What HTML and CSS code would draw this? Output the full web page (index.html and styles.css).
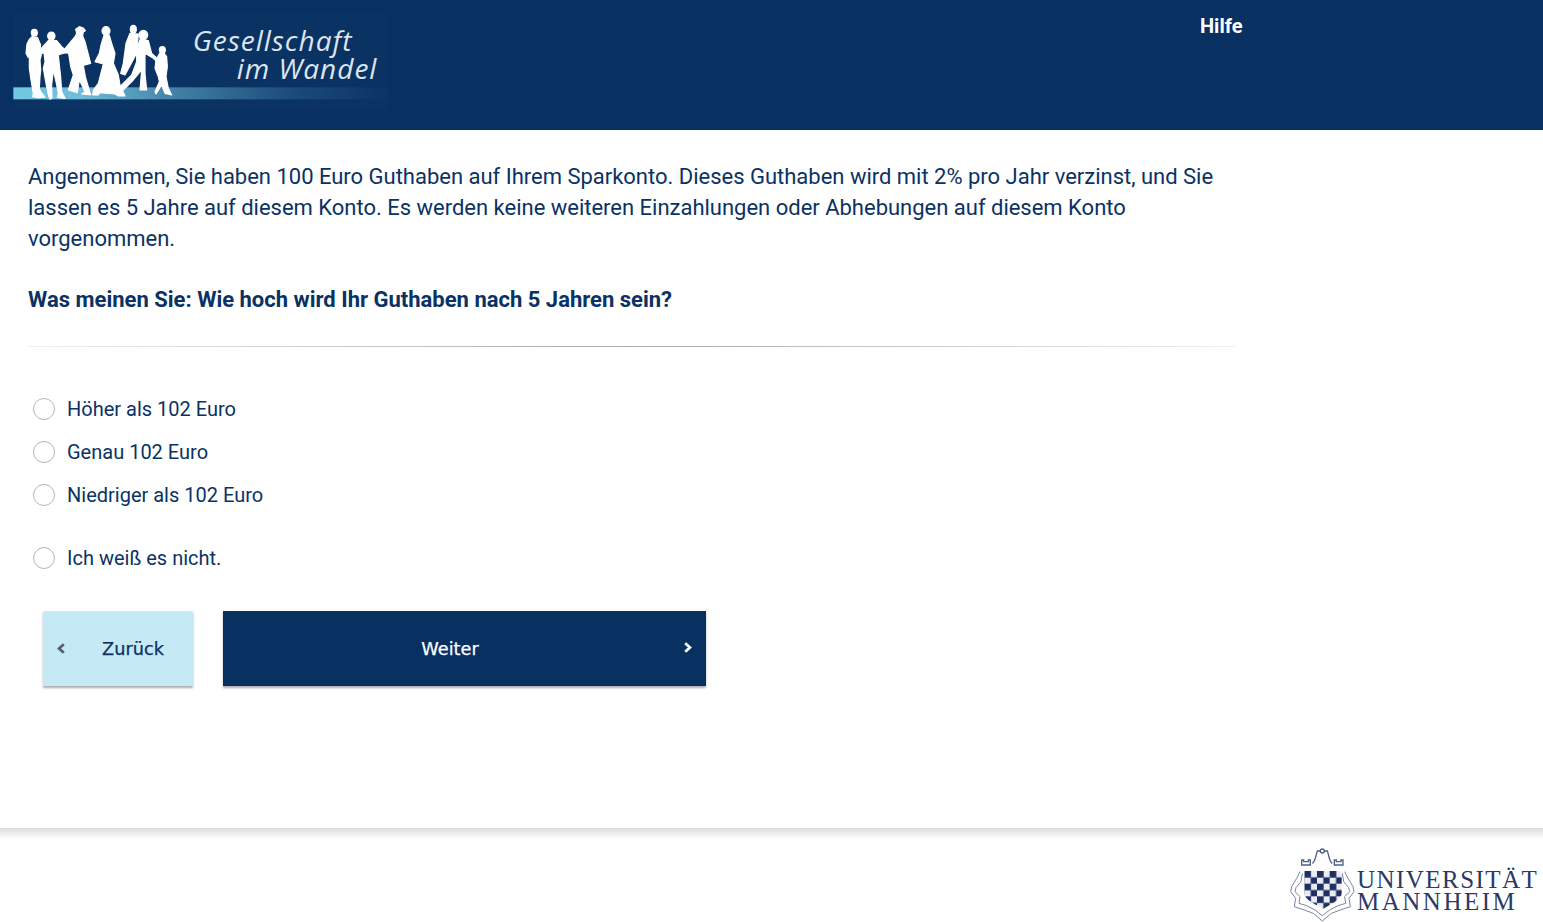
FILE: index.html
```html
<!DOCTYPE html>
<html lang="de">
<head>
<meta charset="utf-8">
<title>Gesellschaft im Wandel</title>
<link rel="stylesheet" href="styles.css">
</head>
<body>
<header class="site-header">
  <svg class="brand" viewBox="0 0 1200 390" width="400" height="130" role="img" aria-label="Gesellschaft im Wandel">
    <defs>
      <linearGradient id="bar" x1="0" x2="1" y1="0" y2="0">
        <stop offset="0" stop-color="#72c8e2"/>
        <stop offset=".18" stop-color="#6dbcd8"/>
        <stop offset=".45" stop-color="#3f7da3"/>
        <stop offset=".75" stop-color="#1b4a78"/>
        <stop offset="1" stop-color="#0b3363"/>
      </linearGradient>
    </defs>
    <rect x="40" y="40" width="1125" height="290" fill="#0a3262"/>
    <rect x="40" y="262" width="1125" height="36" fill="url(#bar)"/>
    <g class="people" fill="#fff" stroke="#fff" stroke-width="3.500" stroke-linejoin="round">
      <g transform="translate(60 60)">
        <ellipse cx="43" cy="38" rx="9" ry="10"/>
        <path d="M36 50L28 58 21 72 18 100 24 112 28 112 28 145 33 180 40 222 38 230 55 233 75 231 62 215 58 205 60 170 62 150 60 120 64 105 60 90 62 75 52 52Z"/>
        <ellipse cx="94" cy="48" rx="11" ry="12"/>
        <path d="M86 60L76 72 60 90 66 100 72 98 75 125 70 145 78 190 85 225 90 238 96 235 95 195 100 150 108 185 115 220 112 232 135 235 125 215 122 170 118 135 115 105 128 100 140 98 135 88 125 80 110 62Z"/>
        <path d="M167 28L178 20 190 24 196 32 190 36 188 48 195 65 212 130 190 136 196 170 212 225 185 222 195 215 178 180 172 218 145 210 160 165 152 140 146 100 128 95 140 80 165 50 170 40Z"/>
      </g>
      <g transform="translate(270 60)">
        <ellipse cx="48" cy="33" rx="12" ry="13"/>
        <path d="M42 46L33 75 28 100 15 125 40 132 25 190 10 210 8 225 25 225 30 218 75 222 85 228 105 228 90 195 85 165 70 130 75 100 65 70 58 46Z"/>
        <ellipse cx="130" cy="28" rx="9" ry="12"/>
        <path d="M120 40L108 70 100 130 92 160 105 165 140 100 145 42Z"/>
        <ellipse cx="160" cy="45" rx="13" ry="14"/>
        <path d="M150 58L140 90 140 125 125 165 95 195 88 210 100 210 130 180 155 150 150 210 170 210 165 160 165 100 190 115 200 125 205 118 185 100 175 62Z"/>
        <ellipse cx="217" cy="90" rx="9" ry="10"/>
        <path d="M208 101L198 120 195 145 205 170 208 185 195 215 198 222 215 195 225 220 245 225 235 205 228 170 232 140 230 110 222 99Z"/>
      </g>
    </g>
    <text class="brand-line" x="578" y="153">Gesellschaft</text>
    <text class="brand-line" x="710" y="237">im Wandel</text>
  </svg>
  <a class="help-link" href="#">Hilfe</a>
</header>

<main class="content">
  <p class="intro">Angenommen, Sie haben 100 Euro Guthaben auf Ihrem Sparkonto. Dieses Guthaben wird mit 2% pro Jahr verzinst, und Sie lassen es 5 Jahre auf diesem Konto. Es werden keine weiteren Einzahlungen oder Abhebungen auf diesem Konto vorgenommen.</p>
  <p class="question">Was meinen Sie: Wie hoch wird Ihr Guthaben nach 5 Jahren sein?</p>
  <hr class="divider">
  <ul class="options">
    <li class="option"><span class="radio"></span>Höher als 102 Euro</li>
    <li class="option"><span class="radio"></span>Genau 102 Euro</li>
    <li class="option"><span class="radio"></span>Niedriger als 102 Euro</li>
    <li class="option option-apart"><span class="radio"></span>Ich weiß es nicht.</li>
  </ul>
  <div class="actions">
    <button class="btn btn-back" type="button">
      <svg class="chevron chevron-left" viewBox="0 0 8 11" width="8" height="11"><path d="M6.800 1.200L2 5.500l4.800 4.300" fill="none" stroke="#555f6c" stroke-width="2.800"/></svg>
      Zurück
    </button>
    <button class="btn btn-next" type="button">
      Weiter
      <svg class="chevron chevron-right" viewBox="0 0 8 11" width="8" height="11"><path d="M1.200 1.200L6 5.500 1.200 9.800" fill="none" stroke="#fff" stroke-width="2.800"/></svg>
    </button>
  </div>
</main>

<footer class="site-footer">
  <div class="uni-logo">
    <svg class="crest" viewBox="0 0 216 231" width="72" height="77" aria-hidden="true">
      <defs>
        <pattern id="check" width="38" height="38" patternUnits="userSpaceOnUse" x="58" y="78">
          <rect width="38" height="38" fill="#e9ebf2"/>
          <rect width="20" height="20" fill="#1f2f62"/>
          <rect x="19" y="19" width="20" height="20" fill="#1f2f62"/>
        </pattern>
      </defs>
      <g fill="none" stroke="#4f5f88" stroke-width="4">
        <path d="M50 60V45H56V50H70V45H76V60ZM82 55C92 50 92 30 97 18H106M118 18H127C132 30 132 50 142 55M148 60V45H154V50H168V45H174V60Z"/>
        <circle cx="112" cy="18" r="6"/>
      </g>
      <g fill="none" stroke="#7684a4" stroke-width="3">
        <path d="M45 80L35 100 20 125 17 140 32 160 28 185 58 195 85 205 112 228 139 205 166 195 196 185 192 160 207 140 204 125 189 100 179 80"/>
        <path d="M52 85L48 110 33 128 30 140 45 155 42 175 65 182 90 195 112 212 134 195 159 182 182 175 179 155 194 140 191 128 176 110 172 85"/>
      </g>
      <path d="M58 78H170V145C170 165 135 178 114 192 93 178 58 165 58 145Z" fill="url(#check)"/>
    </svg>
    <div class="uni-name"><span class="uni-top">UNIVERSITÄT</span><span class="uni-bottom">MANNHEIM</span></div>
  </div>
</footer>
</body>
</html>
```
FILE: styles.css
```css
* { box-sizing: border-box; }
html, body { height: 100%; }
body {
  margin: 0;
  display: flex;
  flex-direction: column;
  overflow: hidden;
  background: #fff;
  color: #0a3264;
  font-family: Roboto, "Liberation Sans", sans-serif;
}
.site-header {
  flex: none;
  height: 130px;
  display: flex;
  align-items: flex-start;
  background: #083061;
}
.brand { display: block; flex: none; }
.people { filter: blur(.8px); }
.brand-line {
  font-family: "Open Sans", sans-serif;
  font-style: italic;
  font-size: 84px;
  letter-spacing: 3px;
  fill: #dde5ee;
}
.help-link {
  margin: 14px 0 0 800px;
  color: #fff;
  font-size: 20px;
  line-height: 24px;
  font-weight: 700;
  text-decoration: none;
}
.content {
  flex: 1;
  padding: 31px 0 0 28px;
  width: 1235px;
}
.intro, .question {
  margin: 0;
  font-size: 22px;
  line-height: 31px;
}
.intro { letter-spacing: -.01px; }
.question { margin-top: 30px; font-weight: 700; }
.divider {
  height: 1px;
  margin: 31px 0 0;
  border: 0;
  background: linear-gradient(90deg, #f0f0f0, #aaa 50%, #f0f0f0);
}
.options {
  list-style: none;
  margin: 40px 0 0;
  padding: 0 0 0 5px;
}
.option {
  display: flex;
  align-items: center;
  gap: 12px;
  height: 43px;
  font-size: 20px;
}
.option-apart { margin-top: 20px; }
.radio {
  width: 22px;
  height: 22px;
  flex: none;
  border: 1px solid #b5b5b5;
  border-radius: 50%;
  background: #fff;
}
.actions {
  display: flex;
  gap: 30px;
  margin: 32px 0 0 15px;
}
.btn {
  position: relative;
  height: 75px;
  border: 0;
  border-radius: 0;
  font-family: "DejaVu Sans", sans-serif;
  font-size: 17.700px;
  -webkit-text-stroke: .25px currentColor;
  box-shadow: 0 2px 2px rgba(0, 0, 0, .32);
}
.btn-back {
  width: 150px;
  padding: 0 0 0 30px;
  background: #c5e9f5;
  color: #0a3264;
}
.btn-next {
  width: 483px;
  padding: 0 29px 0 0;
  background: #083061;
  color: #fff;
}
.chevron { position: absolute; }
.chevron-left { left: 14px; top: 32px; }
.chevron-right { right: 14px; top: 31px; }
.site-footer {
  flex: none;
  height: 94px;
  display: flex;
  justify-content: flex-end;
  align-items: flex-start;
  background: linear-gradient(#dcdcdc, #fff 11px);
}
.uni-logo {
  display: flex;
  margin: 17px 5px 0 0;
}
.crest { flex: none; filter: blur(.3px); }
.uni-name {
  width: 181px;
  display: flex;
  flex-direction: column;
  padding-top: 24px;
  font-family: "Liberation Serif", serif;
  font-size: 25px;
  line-height: 22px;
  white-space: nowrap;
  color: #2a3a68;
}
.uni-top { letter-spacing: 1.450px; }
.uni-bottom { letter-spacing: 2.500px; }
```
